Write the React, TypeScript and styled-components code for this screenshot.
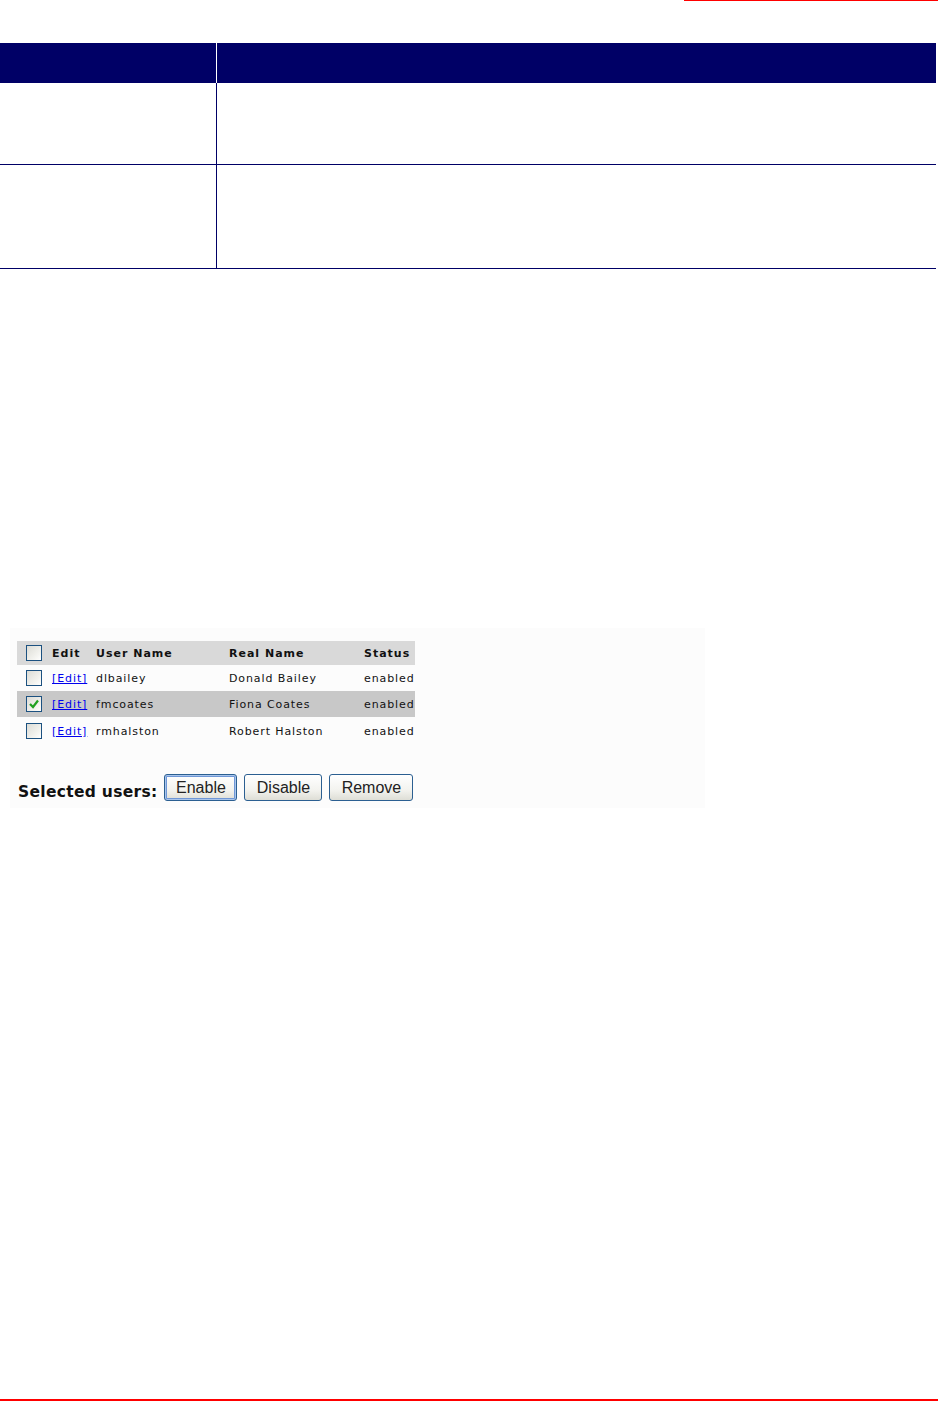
import React from "react"
import styled, { createGlobalStyle } from "styled-components"

const GlobalStyle = createGlobalStyle`
  html, body {
    margin: 0;
    padding: 0;
    background: #ffffff;
  }
  body {
    font-family: "DejaVu Sans", Verdana, sans-serif;
    width: 938px;
    height: 1401px;
    overflow: hidden;
  }
`

const NAVY = "#000066"
const RED = "#ff0000"

type User = {
  login: string
  name: string
  status: string
  checked?: boolean
}

const users: User[] = [
  { login: "dlbailey", name: "Donald Bailey", status: "enabled" },
  { login: "fmcoates", name: "Fiona Coates", status: "enabled", checked: true },
  { login: "rmhalston", name: "Robert Halston", status: "enabled" },
]

const Page = styled.div`
  position: relative;
  width: 938px;
  height: 1401px;
`

const TopRule = styled.div`
  height: 1px;
  margin-left: 684px;
  background: ${RED};
`

const BottomRule = styled.div`
  position: absolute;
  left: 0;
  right: 0;
  top: 1399px;
  height: 2px;
  background: ${RED};
`

const DefTable = styled.div`
  margin-top: 42px;
  width: 936px;
  display: grid;
  grid-template-columns: 216px 1px 719px;
  grid-template-rows: 40px 81px 1px 103px 1px;
`

const HeadCell = styled.div`
  background: ${NAVY};
`

const Divider = styled.div<{ $light?: boolean }>`
  background: ${p => (p.$light ? "#ffffff" : NAVY)};
`

const BodyCell = styled.div`
  background: #ffffff;
`

const RowLine = styled.div`
  grid-column: 1 / 4;
  background: ${NAVY};
`

const Shot = styled.div`
  margin: 359px 0 0 10px;
  width: 695px;
  height: 180px;
  box-sizing: border-box;
  padding: 13px 0 0 7px;
  background: #fcfcfc;
`

const UserTable = styled.div`
  width: 398px;
  display: grid;
  grid-template-columns: 33px 44px 133px 135px 53px;
  font-size: 11px;
  letter-spacing: 0.9px;
  color: #111111;
`

const Row = styled.div<{ $bg: string; $h: number }>`
  display: contents;
  & > * {
    background: ${p => p.$bg};
    height: ${p => p.$h}px;
  }
`

const Cell = styled.div<{ $bold?: boolean }>`
  display: flex;
  align-items: center;
  padding: 1px 0 0 2px;
  box-sizing: border-box;
  white-space: nowrap;
  font-weight: ${p => (p.$bold ? 700 : 400)};
  letter-spacing: ${p => (p.$bold ? "1px" : "0.9px")};
`

const BoxCell = styled.div`
  display: flex;
  align-items: center;
  padding-left: 9px;
`

const Box = styled.span`
  width: 14px;
  height: 14px;
  border: 1px solid #1c5180;
  background: linear-gradient(135deg, #dcdcd6 0%, #f4f4f0 70%, #ffffff 100%);
  display: flex;
  align-items: center;
  justify-content: center;
`

const EditLink = styled.a`
  color: #0000ee;
  text-decoration: underline;
  cursor: pointer;
`

const Actions = styled.div`
  display: flex;
  align-items: flex-end;
  margin-top: 30px;
  padding-left: 1px;
`

const ActionsLabel = styled.span`
  font-weight: 700;
  font-size: 15.5px;
  line-height: 18px;
  letter-spacing: 0.3px;
  color: #111111;
  margin-right: 7px;
`

const Button = styled.button<{ $w: number; $focus?: boolean }>`
  width: ${p => p.$w}px;
  height: 27px;
  margin-right: 7px;
  padding: 0;
  font-family: "Liberation Sans", Arial, sans-serif;
  font-size: 16px;
  color: #222222;
  border: 1px solid #2b5f91;
  border-radius: 3px;
  background: linear-gradient(#ffffff 0%, #f3f3ef 60%, #deded6 100%);
  box-shadow: ${p =>
    p.$focus ? "inset 0 0 0 1px #a9c5ec, inset 0 0 0 2px #6f97d6" : "none"};
`

const Check = () => (
  <svg width="12" height="12" viewBox="0 0 12 12">
    <path d="M2 6 L5 9 L10 2.5" fill="none" stroke="#21a121" strokeWidth="2.2" />
  </svg>
)

export default function App() {
  return (
    <>
      <GlobalStyle />
      <Page>
        <TopRule />
        <DefTable>
          <HeadCell />
          <Divider $light />
          <HeadCell />
          <BodyCell />
          <Divider />
          <BodyCell />
          <RowLine />
          <BodyCell />
          <Divider />
          <BodyCell />
          <RowLine />
        </DefTable>

        <Shot>
          <UserTable>
            <Row $bg="#d9d9d9" $h={24}>
              <BoxCell>
                <Box />
              </BoxCell>
              <Cell $bold>Edit</Cell>
              <Cell $bold>User Name</Cell>
              <Cell $bold>Real Name</Cell>
              <Cell $bold>Status</Cell>
            </Row>
            {users.map((u, i) => (
              <Row key={u.login} $bg={u.checked ? "#c8c8c8" : "#fcfcfc"} $h={i === 2 ? 27 : 26}>
                <BoxCell>
                  <Box>{u.checked && <Check />}</Box>
                </BoxCell>
                <Cell>
                  <EditLink>[Edit]</EditLink>
                </Cell>
                <Cell>{u.login}</Cell>
                <Cell>{u.name}</Cell>
                <Cell>{u.status}</Cell>
              </Row>
            ))}
          </UserTable>
          <Actions>
            <ActionsLabel>Selected users:</ActionsLabel>
            <Button $w={73} $focus>Enable</Button>
            <Button $w={78}>Disable</Button>
            <Button $w={84}>Remove</Button>
          </Actions>
        </Shot>

        <BottomRule />
      </Page>
    </>
  )
}
